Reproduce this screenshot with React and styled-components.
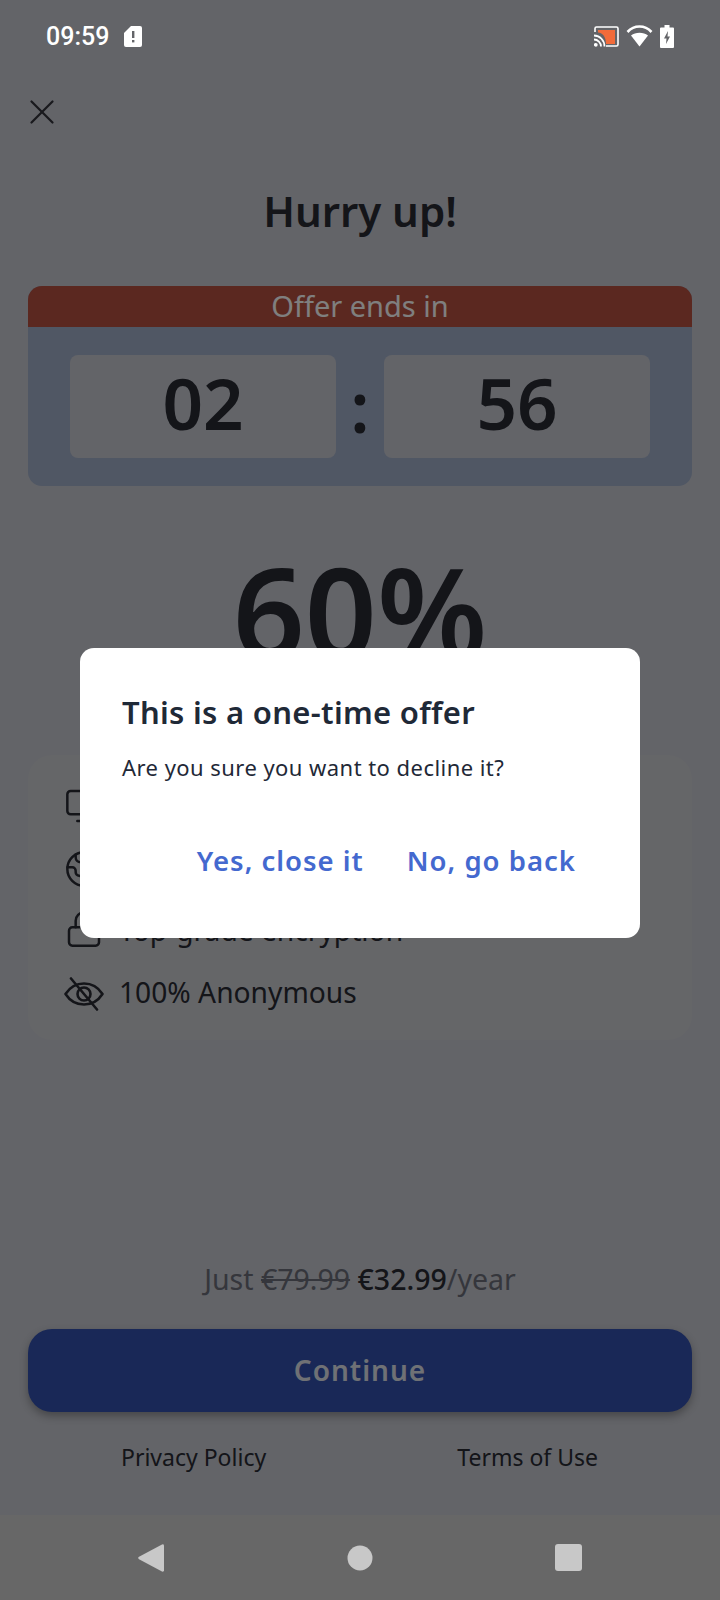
import React from 'react'
import styled, { createGlobalStyle } from 'styled-components'
import { X, Monitor, Earth, Lock } from 'lucide-react'

const GlobalStyle = createGlobalStyle`
  html, body { margin: 0; padding: 0; }
  body { font-family: "Noto Sans", sans-serif; }
`

const Screen = styled.div`
  position: relative;
  width: 720px;
  height: 1600px;
  overflow: hidden;
  background: #c6c8d0;
  display: flex;
  flex-direction: column;
  color: #282a33;
`
const Scrim = styled.div`
  position: absolute;
  inset: 0;
  background: rgba(0, 0, 0, .5);
`
const StatusBar = styled.div`
  position: absolute;
  top: 0;
  left: 0;
  right: 0;
  height: 72px;
  padding: 0 46px;
  display: flex;
  align-items: center;
  justify-content: space-between;
  color: #fff;
`
const StatusGroup = styled.div`
  display: flex;
  align-items: center;
  gap: ${p => p.$gap}px;
`
const Time = styled.span`
  font-family: Roboto, sans-serif;
  font-size: 25px;
  font-weight: 500;
`
const Content = styled.div`
  flex: 1;
  display: flex;
  flex-direction: column;
  padding: 91px 28px 0;
`
const CloseIcon = styled(X)`
  display: block;
  margin-left: -7px;
  color: #32333b;
`
const Title = styled.h1`
  margin: 48px 0 0;
  height: 60px;
  line-height: 60px;
  text-align: center;
  font-size: 42px;
  font-weight: 600;
`
const Timer = styled.div`
  margin-top: 45px;
  height: 200px;
  border-radius: 14px;
  overflow: hidden;
  background: #a0aec8;
`
const TimerHead = styled.div`
  height: 41px;
  line-height: 39px;
  text-align: center;
  background: #b65040;
  color: #fff;
  font-size: 29px;
`
const TimerBody = styled.div`
  display: grid;
  grid-template-columns: 266px 48px 266px;
  justify-content: center;
  align-items: center;
  padding-top: 28px;
`
const Cell = styled.div`
  height: 103px;
  line-height: 95px;
  border-radius: 8px;
  text-align: center;
  background: #c6c8d0;
  font-size: 71px;
  font-weight: 600;
`
const Colon = styled.div`
  text-align: center;
  font-size: 70px;
  font-weight: 600;
  line-height: 103px;
`
const Discount = styled.div`
  margin-top: 45px;
  height: 160px;
  line-height: 160px;
  text-align: center;
  font-size: 126px;
  font-weight: 600;
`
const Features = styled.div`
  margin-top: 64px;
  height: 285px;
  box-sizing: border-box;
  border-radius: 24px;
  background: #cbccd1;
  padding: 31px 36px 0;
  display: flex;
  flex-direction: column;
  gap: 22.5px;
`
const Feature = styled.div`
  display: flex;
  align-items: center;
  gap: 15px;
  height: 40px;
  font-size: 28.2px;
  white-space: nowrap;
`
const FeatureIcon = styled.span`
  width: 40px;
  display: flex;
  justify-content: center;
`
const FeatureText = styled.span`
  padding-bottom: 3px;
`
const LockIcon = styled(Lock)`
  margin-top: -5px;
`
const Price = styled.div`
  margin-top: 220px;
  text-align: center;
  font-size: 28.5px;
  line-height: 38px;
  color: #6a6d78;
`
const Old = styled.span`
  text-decoration: line-through;
`
const Now = styled.span`
  color: #282a33;
  font-weight: 500;
`
const Continue = styled.div`
  margin-top: 31px;
  height: 83px;
  line-height: 83px;
  border-radius: 24px;
  text-align: center;
  background: #3250ae;
  box-shadow: 0 4px 8px rgba(0, 0, 0, .3);
  color: #dfe2ea;
  font-size: 28px;
  font-weight: 600;
  letter-spacing: 1px;
`
const Links = styled.div`
  margin-top: 28px;
  display: flex;
  justify-content: space-between;
  padding: 0 94px 0 93px;
  font-size: 23px;
  line-height: 34px;
`
const NavBar = styled.div`
  position: absolute;
  left: 0;
  right: 0;
  bottom: 0;
  height: 85px;
  background: #676767;
  display: flex;
  align-items: center;
  justify-content: space-between;
  padding: 0 138px;
`
const Dialog = styled.div`
  position: absolute;
  top: 648px;
  left: 80px;
  width: 560px;
  height: 290px;
  box-sizing: border-box;
  padding: 42px 42px 0;
  background: #fff;
  border-radius: 14px;
  color: #1f2937;
`
const DialogTitle = styled.h2`
  margin: 0;
  font-size: 31px;
  line-height: 44px;
  font-weight: 600;
  letter-spacing: .3px;
`
const DialogText = styled.p`
  margin: 17px 0 0;
  font-size: 22px;
  line-height: 32px;
  letter-spacing: .45px;
`
const DialogActions = styled.div`
  margin-top: 58px;
  display: flex;
  justify-content: flex-end;
  gap: 43px;
  padding-right: 22px;
`
const DialogAction = styled.span`
  color: #4469cf;
  font-size: 27.5px;
  line-height: 40px;
  font-weight: 600;
  letter-spacing: 1px;
`

const SimIcon = () => (
  <svg width="18" height="21" viewBox="0 0 18 21">
    <path d="M7 0h9a2 2 0 0 1 2 2v17a2 2 0 0 1-2 2H2a2 2 0 0 1-2-2V7z" fill="#fff" />
    <rect x="8" y="5" width="2.4" height="7" fill="#636468" />
    <rect x="8" y="14" width="2.4" height="2.4" fill="#636468" />
  </svg>
)

const CastIcon = () => (
  <svg width="25" height="21" viewBox="0 0 25 21">
    <path d="M1 6V2.5A1.5 1.5 0 0 1 2.5 1h20A1.5 1.5 0 0 1 24 2.5v16a1.5 1.5 0 0 1-1.5 1.5H12" fill="none" stroke="#fff" strokeWidth="1.6" />
    <path d="M4 4h17v14H12C12 11 9 7 4 6.5z" fill="#f26b3a" />
    <path d="M0 9.5c6 0 10.500 5 10.500 11M0 13.500c3.800 0 7 3.200 7 7" fill="none" stroke="#fff" strokeWidth="1.8" />
    <circle cx="1.8" cy="18.8" r="1.9" fill="#fff" />
  </svg>
)

const WifiIcon = () => (
  <svg width="27" height="22" viewBox="0 0 27 22">
    <path d="M13.500 21.500 5 10.500C7.300 8.700 10.300 7.700 13.500 7.700s6.200 1 8.500 2.800z" fill="#fff" />
    <path d="M1.500 7C4.700 3.500 8.900 1.500 13.500 1.500S22.300 3.500 25.500 7" fill="none" stroke="#fff" strokeWidth="2.6" />
  </svg>
)

const BatteryIcon = () => (
  <svg width="14" height="23" viewBox="0 0 14 23">
    <path d="M4.500 0h5v2.500H13a1 1 0 0 1 1 1V22a1 1 0 0 1-1 1H1a1 1 0 0 1-1-1V3.500a1 1 0 0 1 1-1h3.500z" fill="#fff" />
    <path d="M8 6 4 13.500h2.500L6 19l4-7.500H7.500z" fill="#636468" />
  </svg>
)

const EyeSlashIcon = () => (
  <svg width="40" height="34" viewBox="0 0 40 34" fill="none" stroke="currentColor" strokeWidth="2.6" strokeLinecap="round" strokeLinejoin="round">
    <path d="M1.500 17C6 10 12.500 6.500 20 6.500S34 10 38.500 17C34 24 27.500 27.500 20 27.500S6 24 1.500 17z" />
    <circle cx="20" cy="17" r="6.500" />
    <path d="M7 1.500 33 32.500" />
  </svg>
)

const BackIcon = () => (
  <svg width="26" height="30" viewBox="0 0 26 30">
    <path d="M24 1.500a1.500 1.500 0 0 1 2 1.300v24.400a1.500 1.500 0 0 1-2 1.300L1 16.200a1.500 1.500 0 0 1 0-2.400z" fill="#c8c8c8" />
  </svg>
)

const HomeIcon = () => (
  <svg width="26" height="26" viewBox="0 0 26 26">
    <circle cx="13" cy="13" r="12.500" fill="#c8c8c8" />
  </svg>
)

const RecentIcon = () => (
  <svg width="27" height="27" viewBox="0 0 27 27">
    <rect width="27" height="27" rx="3" fill="#c8c8c8" />
  </svg>
)

export default function App() {
  return (
    <Screen>
      <GlobalStyle />
      <Content>
        <CloseIcon size={42} strokeWidth={1.3} />
        <Title>Hurry up!</Title>
        <Timer>
          <TimerHead>Offer ends in</TimerHead>
          <TimerBody>
            <Cell>02</Cell>
            <Colon>:</Colon>
            <Cell>56</Cell>
          </TimerBody>
        </Timer>
        <Discount>60%</Discount>
        <Features>
          <Feature><FeatureIcon><Monitor size={40} strokeWidth={1.5} /></FeatureIcon></Feature>
          <Feature><FeatureIcon><Earth size={40} strokeWidth={1.5} /></FeatureIcon></Feature>
          <Feature><FeatureIcon><LockIcon size={42} strokeWidth={1.5} /></FeatureIcon><FeatureText>Top-grade encryption</FeatureText></Feature>
          <Feature><FeatureIcon><EyeSlashIcon /></FeatureIcon><FeatureText>100% Anonymous</FeatureText></Feature>
        </Features>
        <Price>Just <Old>€79.99</Old> <Now>€32.99</Now>/year</Price>
        <Continue>Continue</Continue>
        <Links>
          <span>Privacy Policy</span>
          <span>Terms of Use</span>
        </Links>
      </Content>
      <Scrim />
      <StatusBar>
        <StatusGroup $gap={15}>
          <Time>09:59</Time>
          <SimIcon />
        </StatusGroup>
        <StatusGroup $gap={7}>
          <CastIcon />
          <WifiIcon />
          <BatteryIcon />
        </StatusGroup>
      </StatusBar>
      <NavBar>
        <BackIcon />
        <HomeIcon />
        <RecentIcon />
      </NavBar>
      <Dialog>
        <DialogTitle>This is a one-time offer</DialogTitle>
        <DialogText>Are you sure you want to decline it?</DialogText>
        <DialogActions>
          <DialogAction>Yes, close it</DialogAction>
          <DialogAction>No, go back</DialogAction>
        </DialogActions>
      </Dialog>
    </Screen>
  )
}
